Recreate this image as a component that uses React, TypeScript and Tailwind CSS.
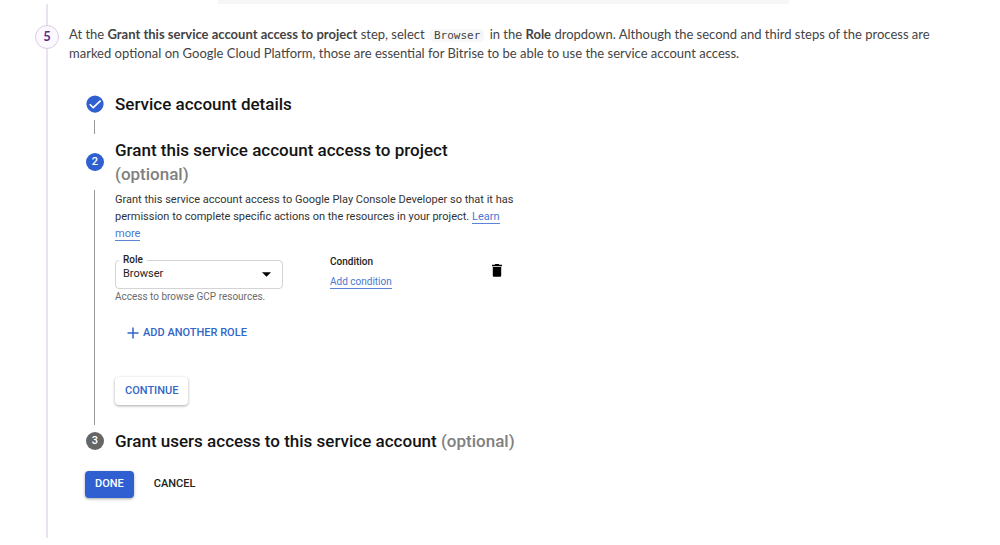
import type { ReactNode } from "react"
import clsx from "clsx"

function CheckIcon() {
  return (
    <svg viewBox="0 0 24 24" className="size-[18px]" aria-hidden="true">
      <circle cx="12" cy="12" r="11.5" fill="#2f5fd0" />
      <path
        d="M5 12.3l4.6 4.6L19.5 7.4"
        fill="none"
        stroke="#fff"
        strokeWidth="2.2"
      />
    </svg>
  )
}

function NumberBadge({ value, active }: { value: number; active?: boolean }) {
  return (
    <span
      className={clsx(
        "flex size-[18px] items-center justify-center rounded-full text-[11px] font-medium text-white",
        active ? "bg-[#2f5fd0]" : "bg-[#666]"
      )}
    >
      {value}
    </span>
  )
}

function StepHeader({ badge, children }: { badge: ReactNode; children: ReactNode }) {
  return (
    <div className="flex items-center gap-[11px]">
      {badge}
      <h2 className="text-[17px] leading-6 font-medium text-[#141414]">{children}</h2>
    </div>
  )
}

const linkClass = "border-b border-[#5b86d6] text-[#4a78cf]"

function RoleForm() {
  return (
    <form>
      <p className="max-w-[400px] text-[11px] leading-[17px] text-[#333]">
        Grant this service account access to Google Play Console Developer so that
        it has permission to complete specific actions on the resources in your
        project.{" "}
        <a href="#learn-more" className={linkClass}>
          Learn more
        </a>
      </p>

      <div className="mt-[18px] flex items-start">
        <div className="w-[215px]">
          <div className="relative w-[168px]">
            <label
              htmlFor="role"
              className="absolute -top-1.5 left-1 bg-white px-1 text-[10px] leading-3 font-medium text-[#222]"
            >
              Role
            </label>
            <select
              id="role"
              className="block h-[29px] w-full appearance-none rounded border border-[#d4d4d4] bg-white pr-8 pl-[7px] text-[11px] text-[#222]"
            >
              <option>Browser</option>
            </select>
            <svg
              viewBox="0 0 10 5"
              className="pointer-events-none absolute top-3 right-3 h-[5px] w-[9px]"
              aria-hidden="true"
            >
              <path d="M0 0h10L5 5z" fill="#000" />
            </svg>
          </div>
          <p className="text-[10px] leading-4 text-[#6b6b6b]">
            Access to browse GCP resources.
          </p>
        </div>
        <div className="w-[162px] text-[10px]">
          <h3 className="-mt-1.5 leading-4 font-medium text-[#222]">Condition</h3>
          <a
            href="#condition"
            className={clsx("mt-1.5 inline-block leading-3", linkClass)}
          >
            Add condition
          </a>
        </div>
        <button type="button" aria-label="Delete role" className="mt-1">
          <svg viewBox="0 0 10 13" className="h-[13px] w-2.5" aria-hidden="true">
            <path d="M3.3 0h3.4l.6.8H10v1.4H0V.8h2.7zM.8 3h8.4v8.4c0 .9-.6 1.4-1.4 1.4H2.2c-.8 0-1.4-.5-1.4-1.4z" />
          </svg>
        </button>
      </div>

      <button
        type="button"
        className="mt-4 ml-3 flex h-6 items-center gap-1 text-[11px] font-medium text-[#3366c8]"
      >
        <svg viewBox="0 0 12 12" className="size-3" aria-hidden="true">
          <path d="M6 .5v11M.5 6h11" stroke="currentColor" strokeWidth="1.5" />
        </svg>
        ADD ANOTHER ROLE
      </button>

      <button
        type="button"
        className="mt-8 h-7 rounded-sm bg-white px-2.5 text-[11px] font-medium text-[#3366c8] shadow-[0_1px_3px_rgba(0,0,0,0.35)]"
      >
        CONTINUE
      </button>
    </form>
  )
}

function Stepper() {
  return (
    <section className="ml-4 pt-[29px] font-[Roboto,sans-serif]">
      <div className="pl-px">
        <StepHeader badge={<CheckIcon />}>Service account details</StepHeader>
        <div className="my-1 ml-2 h-[14px] w-px bg-[#9a9a9a]" />
        <StepHeader badge={<NumberBadge value={2} active />}>
          Grant this service account access to project
          <span className="block text-[#808080]">(optional)</span>
        </StepHeader>
        <div className="my-1 flex gap-5 pl-2">
          <div className="w-px shrink-0 bg-[#9a9a9a]" />
          <div className="min-w-0 pt-px pb-5">
            <RoleForm />
          </div>
        </div>
        <StepHeader badge={<NumberBadge value={3} />}>
          Grant users access to this service account{" "}
          <span className="text-[#808080]">(optional)</span>
        </StepHeader>
      </div>
      <div className="mt-[18px] flex gap-2.5 text-[11px] font-medium">
        <button
          type="button"
          className="h-[27px] rounded-sm bg-[#2f5fd0] px-2.5 text-white shadow-[0_1px_3px_rgba(0,0,0,0.35)]"
        >
          DONE
        </button>
        <button type="button" className="h-[27px] px-2.5 text-[#222]">
          CANCEL
        </button>
      </div>
    </section>
  )
}

export default function App() {
  return (
    <div className="bg-white">
      <div className="mr-[211px] ml-[218px] h-1 bg-[#f6f6f6]" />
      <main className="flex gap-[10px] pr-10 pl-[35px]">
        <div className="flex w-6 shrink-0 flex-col items-center">
          <div className="h-[21px] w-0.5 bg-[#ebe2f1]" />
          <div className="flex size-6 items-center justify-center rounded-full border border-[#dccbe8] bg-[#fcf9fe] font-[Lato,sans-serif] text-[13px] font-bold text-[#5a2d8a]">
            5
          </div>
          <div className="w-0.5 grow bg-[#ebe2f1]" />
        </div>
        <div className="min-w-0 pt-[21px] pb-10">
          <p className="font-[Lato,sans-serif] text-[13px] leading-[19px] text-[#444]">
            At the <strong>Grant this service account access to project</strong> step,
            select{" "}
            <code className="mx-0.5 rounded-sm bg-[#f5f7f8] px-1 font-['DejaVu_Sans_Mono',monospace] text-[11px] leading-none">
              Browser
            </code>{" "}
            in the <strong>Role</strong> dropdown. Although the second and third steps
            of the process are marked optional on Google Cloud Platform, those are
            essential for Bitrise to be able to use the service account access.
          </p>
          <Stepper />
        </div>
      </main>
    </div>
  )
}
